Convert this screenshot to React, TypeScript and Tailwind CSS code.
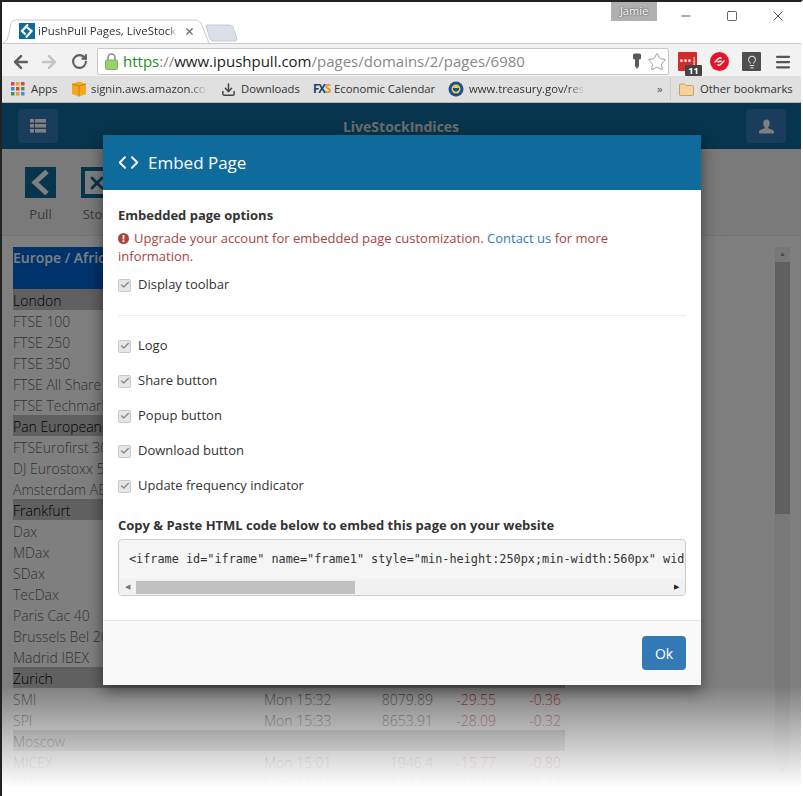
import React from "react";
import { ArrowLeft, ArrowRight, RotateCw, Star, X, Minus, Square, Code, Menu, Download, Check, Lightbulb } from "lucide-react";

const OPEN = "font-['Open_Sans',sans-serif]";

type Row = { name: string; time?: string; last?: string; change?: string; pct?: string; group?: boolean };

const rows: Row[] = [
  { name: "London", group: true },
  { name: "FTSE 100" },
  { name: "FTSE 250" },
  { name: "FTSE 350" },
  { name: "FTSE All Share" },
  { name: "FTSE Techmark" },
  { name: "Pan European", group: true },
  { name: "FTSEurofirst 300" },
  { name: "DJ Eurostoxx 50" },
  { name: "Amsterdam AEX" },
  { name: "Frankfurt", group: true },
  { name: "Dax" },
  { name: "MDax" },
  { name: "SDax" },
  { name: "TecDax" },
  { name: "Paris Cac 40" },
  { name: "Brussels Bel 20" },
  { name: "Madrid IBEX" },
  { name: "Zurich", group: true },
  { name: "SMI", time: "Mon 15:32", last: "8079.89", change: "-29.55", pct: "-0.36" },
  { name: "SPI", time: "Mon 15:33", last: "8653.91", change: "-28.09", pct: "-0.32" },
  { name: "Moscow", group: true },
  { name: "MICEX", time: "Mon 15:01", last: "1946.4", change: "-15.77", pct: "-0.80" },
  { name: "RTS", time: "Mon 15:01", last: "824.28", change: "-10.14", pct: "-1.22" },
];

const options = ["Logo", "Share button", "Popup button", "Download button", "Update frequency indicator"];

const FakeCheck = () => (
  <span className="flex h-[13px] w-[13px] shrink-0 items-center justify-center rounded-[2px] border border-[#c8c8c8] bg-[#e6e6e6]">
    <Check size={10} strokeWidth={3.5} className="text-[#8a8a8a]" />
  </span>
);

const BrandMark = ({ size }: { size: number }) => (
  <svg width={size} height={size} viewBox="0 0 16 16">
    <rect width="16" height="16" fill="#0f6b9b" />
    <path d="M9 1.5 L3 8 L6.5 11.5 M8 4.5 L12.5 8 L7 14.5" fill="none" stroke="#fff" strokeWidth="2.2" />
  </svg>
);

const ChromeBar = () => (
  <>
    {/* tab strip */}
    <div className="relative flex h-[41px] bg-white">
      <div className="relative mt-[17px] flex h-[24px] w-[205px] items-center pl-[17px]">
        <svg className="absolute left-0 top-0" width="212" height="25" viewBox="0 0 212 25">
          <path d="M1 24 C5 23 6 19 8 9 C9 3 10 1 15 1 L192 1 C197 1 199 3 201 9 L207 24" fill="#fff" stroke="#c9c9c9" />
        </svg>
        <span className="relative"><BrandMark size={16} /></span>
        <span className={`relative ml-[3px] w-[139px] overflow-hidden whitespace-nowrap text-[11.4px] text-[#333] [mask-image:linear-gradient(to_right,#000_94%,transparent)] ${OPEN}`}>iPushPull Pages, LiveStock Indices</span>
        <X size={11} strokeWidth={2.5} className="relative ml-[7px] text-[#666]" />
      </div>
      <svg className="-ml-[2px] mt-[22px]" width="34" height="18" viewBox="0 0 34 18">
        <path d="M1 2 Q1 1 3 1 L25 1 Q27 1 28 3 L32 15 Q32 17 30 17 L8 17 Q6 17 5 15 Z" fill="#dbe0e8" stroke="#c6cad0" />
      </svg>
      <div className={`absolute left-[609px] top-0 flex h-[19px] w-[46px] items-center justify-center bg-[#b0b0b0] text-[11px] text-white [text-shadow:0_0_2px_#222] ${OPEN}`}>Jamie</div>
      <div className="absolute right-0 top-0 flex h-[28px] items-center text-[#111]">
        <div className="flex w-[46px] justify-center"><Minus size={14} strokeWidth={1.2} /></div>
        <div className="flex w-[46px] justify-center"><Square size={12} strokeWidth={1.3} /></div>
        <div className="flex w-[46px] justify-center"><X size={16} strokeWidth={1.1} /></div>
      </div>
    </div>
    {/* address bar */}
    <div className="flex h-[33px] items-center border-t border-[#c9c9c9] bg-[#f2f2f2] pt-[3px]">
      <ArrowLeft size={20} strokeWidth={3} className="ml-[9px] text-[#5f5f5f]" />
      <ArrowRight size={20} strokeWidth={3} className="ml-[8px] text-[#c4c4c4]" />
      <RotateCw size={17} strokeWidth={3} className="ml-[12px] text-[#5f5f5f]" />
      <div className="ml-[9px] flex h-[27px] w-[572px] items-center rounded-[2px] border border-[#c8c8c8] bg-white pl-[7px]">
        <svg width="13" height="17" viewBox="0 0 13 17" className="shrink-0">
          <path d="M3 7 V4.5 a3.5 3.5 0 0 1 7 0 V7" fill="none" stroke="#8c8c8c" strokeWidth="1.6" />
          <rect x="0.5" y="7" width="12" height="9.5" rx="1" fill="#9ad16f" stroke="#7cb356" />
        </svg>
        <span className={`ml-[5px] whitespace-nowrap text-[15px] ${OPEN}`}>
          <span className="text-[#1e8e1e]">https</span>
          <span className="text-[#888]">://</span>
          <span className="text-[#222]">www.ipushpull.com</span>
          <span className="text-[#888]">/pages/domains/2/pages/6980</span>
        </span>
        <div className="ml-auto mr-[1px] flex items-center gap-[5px]">
          <svg width="10" height="17" viewBox="0 0 10 17">
            <path d="M1 2 Q1 0.5 2.5 0.5 H7.5 Q9 0.5 9 2 V5 Q9 6.5 7.5 6.5 H7 V13 L5 16 L3 13 V6.5 H2.5 Q1 6.5 1 5 Z" fill="#5a5a5a" />
          </svg>
          <Star size={20} strokeWidth={1} className="text-[#8a8a8a]" />
        </div>
      </div>
      <div className="relative ml-[9px] h-[19px] w-[19px] rounded-[1px] bg-[#d32a2a]">
        <span className="absolute left-[2px] top-[5px] text-[8px] font-bold leading-[8px] tracking-[1px] text-white">•••|</span>
        <span className={`absolute left-[7px] top-[13px] flex h-[11px] w-[17px] items-center justify-center rounded-[1px] bg-[#444] text-[9px] font-bold text-white ${OPEN}`}>11</span>
      </div>
      <div className="ml-[13px] flex h-[19px] w-[19px] items-center justify-center rounded-full bg-[#e5142a]">
        <svg width="13" height="13" viewBox="0 0 13 13">
          <path d="M1.5 7.5 L5.5 3.5 Q7 2 8.5 3.5 M4.5 9.5 Q6 11 7.5 9.5 L11.5 5.5 M4.5 7 L8.5 6" fill="none" stroke="#fff" strokeWidth="1.3" />
        </svg>
      </div>
      <div className="ml-[13px] flex h-[19px] w-[19px] items-center justify-center rounded-[1px] bg-[#4f4f4f]">
        <Lightbulb size={14} strokeWidth={1.6} className="text-white" />
      </div>
      <Menu size={18} strokeWidth={3} className="ml-[13px] text-[#555]" />
    </div>
    {/* bookmarks */}
    <div className={`relative flex h-[27px] items-center border-b border-[#b5b5b5] bg-[#e0e0e0] pl-[9px] text-[11.3px] text-[#333] ${OPEN}`}>
      <svg width="14" height="14" viewBox="0 0 14 14">
        <g>
          <rect x="0" y="0" width="3.5" height="3.5" fill="#d9463c" /><rect x="5" y="0" width="3.5" height="3.5" fill="#e5a02a" /><rect x="10" y="0" width="3.5" height="3.5" fill="#d9463c" />
          <rect x="0" y="5" width="3.5" height="3.5" fill="#4a86e8" /><rect x="5" y="5" width="3.5" height="3.5" fill="#d9463c" /><rect x="10" y="5" width="3.5" height="3.5" fill="#3f9b4c" />
          <rect x="0" y="10" width="3.5" height="3.5" fill="#3f9b4c" /><rect x="5" y="10" width="3.5" height="3.5" fill="#e5a02a" /><rect x="10" y="10" width="3.5" height="3.5" fill="#4a86e8" />
        </g>
      </svg>
      <span className="ml-[6px] w-[28px]">Apps</span>
      <svg className="ml-[12px]" width="16" height="16" viewBox="0 0 16 16">
        <path d="M8 0.5 L15 3 V13 L8 15.5 L1 13 V3 Z" fill="#f4a81c" /><path d="M8 5 V15.5 M1 3 L8 5 L15 3" fill="none" stroke="#c97f10" />
      </svg>
      <span className="ml-[4px] w-[116px] overflow-hidden whitespace-nowrap [mask-image:linear-gradient(to_right,#000_85%,transparent)]">signin.aws.amazon.com</span>
      <Download size={15} strokeWidth={2.4} className="ml-[14px] text-[#444]" />
      <span className="ml-[5px] w-[60px] whitespace-nowrap">Downloads</span>
      <span className="ml-[12px] w-[17px] text-[11.5px] font-bold tracking-[-1px] text-[#1a3f6b]">FX<span className="text-[#e8951a]">S</span></span>
      <span className="ml-[4px] w-[104px] whitespace-nowrap">Economic Calendar</span>
      <svg className="ml-[10px]" width="16" height="16" viewBox="0 0 16 16">
        <circle cx="8" cy="8" r="7.5" fill="#1c4f94" /><circle cx="8" cy="8" r="4.5" fill="#e8c94a" /><path d="M5 7 H11 V9 L8 11 L5 9 Z" fill="#1c4f94" />
      </svg>
      <span className="ml-[5px] w-[116px] overflow-hidden whitespace-nowrap [mask-image:linear-gradient(to_right,#000_85%,transparent)]">www.treasury.gov/resource</span>
      <span className="ml-[72px] w-[10px] text-[#555]">»</span>
      <span className="ml-[3px] h-[22px] w-px bg-[#ccc]" />
      <svg className="ml-[8px]" width="15" height="13" viewBox="0 0 15 13">
        <path d="M0.5 2 Q0.5 1 1.5 1 H5.5 L7 2.5 H13.5 Q14.5 2.5 14.5 3.5 V12 Q14.5 12.5 13.5 12.5 H1.5 Q0.5 12.5 0.5 12 Z" fill="#f3d399" stroke="#c9a263" />
      </svg>
      <span className="ml-[6px] whitespace-nowrap">Other bookmarks</span>
    </div>
  </>
);

const Sheet = () => (
  <div className={`relative h-[693px] bg-white ${OPEN}`}>
    <div className="flex h-[46px] items-center justify-between bg-[#0f6b9b] pl-[16px] pr-[15px]">
      <div className="flex h-[34px] w-[40px] items-center justify-center rounded-[4px] bg-[#337ab7]">
        <svg width="16" height="14" viewBox="0 0 16 14" fill="#fff">
          <rect x="0" y="0" width="4" height="3.6" /><rect x="5" y="0" width="11" height="3.6" />
          <rect x="0" y="5" width="4" height="3.6" /><rect x="5" y="5" width="11" height="3.6" />
          <rect x="0" y="10" width="4" height="3.6" /><rect x="5" y="10" width="11" height="3.6" />
        </svg>
      </div>
      <span className="-ml-[2px] text-[14px] font-bold text-[#d9d9d9]">LiveStockIndices</span>
      <div className="flex h-[34px] w-[40px] items-center justify-center rounded-[4px] bg-[#337ab7]">
        <svg width="15" height="15" viewBox="0 0 15 15" fill="#fff">
          <path d="M7.5 0.5 C5.3 0.5 4.3 2.2 4.3 4.2 C4.3 6 5 7.4 5.8 8.2 V9.2 L1 11.2 Q0 11.7 0 13 V14.5 H15 V13 Q15 11.7 14 11.2 L9.2 9.2 V8.2 C10 7.4 10.7 6 10.7 4.2 C10.7 2.2 9.7 0.5 7.5 0.5 Z" />
        </svg>
      </div>
    </div>
    <div className="flex h-[87px] gap-[25px] border-b border-[#e8e8e8] bg-[#f4f4f4] pl-[23px] pt-[18px] text-[13px] text-[#777]">
      <div className="flex w-[31px] flex-col items-center gap-[7px]">
        <div className="flex h-[31px] w-[31px] items-center justify-center bg-[#0f6b9b]">
          <svg width="19" height="25" viewBox="0 0 19 25"><path d="M16 1.5 L4 12.5 L16 23.5" fill="none" stroke="#fff" strokeWidth="5" /></svg>
        </div>
        Pull
      </div>
      <div className="flex w-[31px] flex-col items-center gap-[7px]">
        <div className="flex h-[31px] w-[31px] items-center justify-center bg-[#0f6b9b]">
          <div className="flex h-[23px] w-[23px] items-center justify-center bg-white"><X size={20} strokeWidth={3.5} className="text-[#0f6b9b]" /></div>
        </div>
        Stop
      </div>
    </div>
    <div className="flex">
      <div className="ml-[11px] mt-[11px] w-[552px] text-[14px] font-light text-[#222]">
        <div className="flex h-[42px] items-start bg-[#0066d8] font-semibold text-white">Europe / Africa</div>
        {rows.map((r) => (
          <div key={r.name} className={`flex h-[21px] items-center pt-[2px] leading-[21px] ${r.group ? "bg-[#c0c0c0] text-black" : "text-[#666]"}`}>
            <span className="w-[251px]">{r.name}</span>
            <span className="w-[75px]">{r.time}</span>
            <span className="w-[94px] text-right">{r.last}</span>
            <span className="w-[63px] text-right text-[#c8282d]">{r.change}</span>
            <span className="w-[65px] text-right text-[#c8282d]">{r.pct}</span>
          </div>
        ))}
      </div>
      <div className="ml-[210px] mt-[11px] flex h-[532px] w-[15px] flex-col bg-[#f1f1f1]">
        <div className="flex h-[15px] items-center justify-center text-[7px] text-[#999]">▲</div>
        <div className="h-[252px] bg-[#c1c1c1]" />
        <div className="mt-auto flex h-[15px] items-center justify-center text-[7px] text-[#999]">▼</div>
      </div>
    </div>
  </div>
);

const EmbedModal = () => (
  <div className={`absolute left-[103px] top-[135px] flex h-[550px] w-[598px] flex-col bg-white text-[13px] text-[#333] shadow-[0_5px_15px_rgba(0,0,0,0.5)] ${OPEN}`}>
    <div className="flex h-[55px] items-center gap-[9px] bg-[#0f6b9b] px-[15px] text-white">
      <Code size={21} strokeWidth={2.2} />
      <span className="text-[17px]">Embed Page</span>
    </div>
    <div className="flex flex-1 flex-col px-[15px] pt-[16px]">
      <p className="font-bold leading-[18px]">Embedded page options</p>
      <p className="mt-[5px] leading-[18px] text-[#a94442]">
        <svg width="11" height="11" viewBox="0 0 11 11" className="mr-[5px] inline align-[-0.5px]">
          <circle cx="5.5" cy="5.5" r="5.5" fill="#a94442" />
          <rect x="4.6" y="2" width="1.8" height="4.4" fill="#fff" />
          <rect x="4.6" y="7.3" width="1.8" height="1.8" fill="#fff" />
        </svg>
        Upgrade your account for embedded page customization. <span className="text-[#337ab7]">Contact us</span> for more information.
      </p>
      <label className="mt-[11px] flex h-[18px] items-center gap-[7px]"><FakeCheck />Display toolbar</label>
      <div className="mt-[21px] h-px bg-[#eee]" />
      <div className="mt-[21px] flex flex-col gap-[17px]">
        {options.map((o) => (
          <label key={o} className="flex h-[18px] items-center gap-[7px]"><FakeCheck />{o}</label>
        ))}
      </div>
      <p className="mt-[21px] font-bold leading-[18px]">Copy &amp; Paste HTML code below to embed this page on your website</p>
      <div className="mt-[5px] h-[57px] overflow-hidden rounded-[4px] border border-[#ccc] bg-[#f5f5f5]">
        <div className="flex h-[39px] items-center overflow-hidden whitespace-nowrap pl-[10px] font-['DejaVu_Sans_Mono',monospace] text-[11.84px] text-[#333]">
          {'<iframe id="iframe" name="frame1" style="min-height:250px;min-width:560px" width="100%" height="100%"'}
        </div>
        <div className="flex h-[16px] items-center bg-[#f1f1f1]">
          <span className="flex w-[17px] justify-center text-[7px] text-[#777]">◀</span>
          <div className="h-[13px] w-[219px] bg-[#c1c1c1]" />
          <span className="ml-auto flex w-[17px] justify-center text-[7px] text-[#222]">▶</span>
        </div>
      </div>
    </div>
    <div className="flex h-[65px] items-center justify-end border-t border-[#e5e5e5] bg-[#f9f9f9] px-[15px]">
      <button className="h-[34px] w-[44px] rounded-[4px] bg-[#337ab7] text-[14px] text-white">Ok</button>
    </div>
  </div>
);

const App = () => {
  return (
    <div className="relative h-[796px] w-[803px] overflow-hidden bg-white">
      <div className="border-l-2 border-r-2 border-t-2 border-l-[#222] border-r-white border-t-[#222]">
        <ChromeBar />
        <div className="relative">
          <Sheet />
          <div className="absolute inset-0 bg-black/50" />
          <div className="absolute inset-x-0 bottom-0 h-[110px] bg-gradient-to-b from-transparent to-white to-[92%]" />
        </div>
      </div>
      <EmbedModal />
    </div>
  );
};

export default App;
